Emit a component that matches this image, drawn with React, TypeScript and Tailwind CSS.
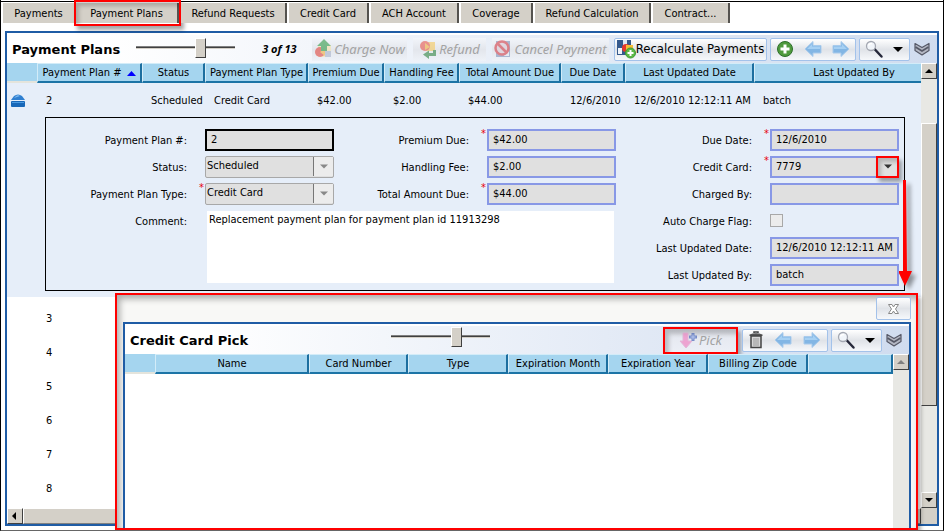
import React from "react";

const UI = "font-['DejaVu_Sans_Condensed','DejaVu_Sans',sans-serif] [font-stretch:condensed]";
const SLANTED = "font-['Noto_Sans','Open_Sans',sans-serif] italic [font-stretch:normal]";

function Arrow({ flip = false }: { flip?: boolean }) {
  return (
    <svg width="18" height="18" viewBox="0 0 18 18" className={flip ? "-scale-x-100" : ""} aria-hidden="true">
      <path d="M1 9 L9 1.500 V5.500 H17 V13 H9 V16.500 Z" fill="#83b6e4" stroke="#a9cbec" strokeWidth="1" />
      <path d="M3 9 L8 4 V6.500 H16 V9 Z" fill="#a6d0f3" />
    </svg>
  );
}

function SearchIcon() {
  return (
    <svg width="22" height="19" viewBox="0 0 22 19" aria-hidden="true">
      <path d="M10.500 9 L17.500 16.500" stroke="#26283a" strokeWidth="2.500" strokeLinecap="round" />
      <circle cx="7" cy="6" r="4.500" fill="#f1f5fa" stroke="#a4a8b2" strokeWidth="1.300" />
      <path d="M4.500 5.500 Q5 3.500 8 3.500" stroke="#fff" strokeWidth="1.500" fill="none" />
    </svg>
  );
}

function Caret({ className }: { className: string }) {
  return (
    <svg width="10" height="5" viewBox="0 0 10 5" className={className} aria-hidden="true">
      <path d="M0 0 H10 L5 5 Z" fill="currentColor" />
    </svg>
  );
}

function Chevrons() {
  return (
    <svg width="16" height="14" viewBox="0 0 16 14" aria-hidden="true">
      <path d="M1 1.500 L8 5.500 L15 1.500 V8.500 L8 13 L1 8.500 Z" fill="#b3b7c3" stroke="#555866" strokeWidth="1.200" strokeLinejoin="round" />
      <path d="M1.500 5 L8 9 L14.500 5" fill="none" stroke="#555866" strokeWidth="1.600" />
    </svg>
  );
}

function ChargeIcon() {
  return (
    <svg width="18" height="20" viewBox="0 0 18 20" className="opacity-60" aria-hidden="true">
      <rect x="4" y="6" width="13" height="12" fill="#f6e3a8" />
      <circle cx="6" cy="13" r="5" fill="#e2453c" />
      <path d="M6 13 L11 9 V17 Z" fill="#f3b23f" />
      <rect x="11" y="12" width="6" height="6" fill="#a9b4cc" />
      <path d="M10 0 L17 7 H13 V12 H7 V7 H3 Z" fill="#2f9a47" />
    </svg>
  );
}

function RefundIcon() {
  return (
    <svg width="18" height="19" viewBox="0 0 18 19" className="opacity-60" aria-hidden="true">
      <rect x="7" y="2" width="9" height="9" fill="#f6c95c" />
      <circle cx="6" cy="6" r="5" fill="#e8574c" />
      <path d="M6 3 L11 7 L6 10 Z" fill="#f3b23f" />
      <path d="M14 10 H17 V16 H10 V19 L4 14.500 L10 10.500 V13 H14 Z" fill="#2f8440" />
    </svg>
  );
}

function CancelIcon() {
  return (
    <svg width="18" height="18" viewBox="0 0 18 18" className="opacity-60" aria-hidden="true">
      <rect x="2" y="1" width="14" height="16" fill="#7f93ba" />
      <rect x="10" y="10" width="5" height="6" fill="#e3e9f3" />
      <circle cx="8" cy="8" r="6.500" fill="#dccbd5" stroke="#d43b45" strokeWidth="2.500" />
      <path d="M4 4 L12 12" stroke="#d43b45" strokeWidth="2.500" />
    </svg>
  );
}

function RecalcIcon() {
  return (
    <svg width="19" height="20" viewBox="0 0 19 20" aria-hidden="true">
      <rect x="0" y="1" width="14" height="15" fill="#35598c" />
      <rect x="6" y="1" width="4" height="5" fill="#dfe8f4" />
      <rect x="1" y="9" width="4" height="6" fill="#eef3fa" />
      <circle cx="9" cy="9" r="4" fill="#e5382c" />
      <rect x="9" y="6" width="7" height="6" fill="#f7bd35" />
      <circle cx="13.500" cy="14" r="5" fill="#5cb947" stroke="#3f9a35" />
      <path d="M13.500 11 V17 M10.500 14 H16.500" stroke="#fff" strokeWidth="2" />
    </svg>
  );
}

function AddIcon() {
  return (
    <svg width="18" height="18" viewBox="0 0 18 18" aria-hidden="true">
      <circle cx="9" cy="9" r="7.500" fill="#4f9a3d" stroke="#2d6f2b" />
      <path d="M9 4.500 V13.500 M4.500 9 H13.500" stroke="#fff" strokeWidth="3" />
    </svg>
  );
}

function TrashIcon() {
  return (
    <svg width="14" height="18" viewBox="0 0 14 18" aria-hidden="true">
      <path d="M5 2 V1 H9 V2" fill="none" stroke="#444" strokeWidth="1.500" />
      <path d="M0.500 3.500 Q7 1 13.500 3.500 V5 H0.500 Z" fill="#555" />
      <path d="M2 5 H12 V16.500 H2 Z" fill="#d7d7d7" stroke="#444" strokeWidth="1.500" />
      <path d="M5 7 V15 M7 7 V15 M9 7 V15" stroke="#999" />
    </svg>
  );
}

function PickIcon() {
  return (
    <svg width="18" height="17" viewBox="0 0 18 17" className="opacity-70" aria-hidden="true">
      <path d="M4 1 H9 V9 H13 L7 16 L1 9 H4 Z" fill="#f086c4" stroke="#dfa0cb" />
      <path d="M14 1 V9 M10 5 H18" stroke="#4966b8" strokeWidth="3" />
      <path d="M14 2.500 V7.500 M11.500 5 H16.500" stroke="#a6baf0" strokeWidth="1" />
    </svg>
  );
}

function DrawerIcon() {
  return (
    <svg width="14" height="13" viewBox="0 0 14 13" aria-hidden="true">
      <path d="M0 6 L3 2 Q7 -1 11 2 L14 6 Z" fill="#2f7fd0" />
      <path d="M3 4 Q5 1.500 7 1 L9 2 Z" fill="#7db9ee" />
      <rect x="0" y="7" width="14" height="6" rx="1" fill="#1767b8" />
      <rect x="1" y="8" width="12" height="1" fill="#4b9be2" />
    </svg>
  );
}

function ScrollButton({ dir, muted = false }: { dir: "up" | "down" | "left"; muted?: boolean }) {
  const paths = { up: "M0 4 L4 0 L8 4 Z", down: "M0 0 H8 L4 4 Z", left: "M5 0 V8 L1 4 Z" };
  return (
    <button
      aria-label={`Scroll ${dir}`}
      className="flex h-4 w-4 shrink-0 items-center justify-center border border-t-white border-l-white border-r-[#404040] border-b-[#404040] bg-[#d4d0c8]"
    >
      <svg width="8" height={dir === "left" ? 8 : 4} viewBox={dir === "left" ? "0 0 8 8" : "0 0 8 4"} aria-hidden="true">
        <path d={paths[dir]} fill={muted ? "#808080" : "#000"} />
      </svg>
    </button>
  );
}

function RangeSlider({ label, value }: { label: string; value: number }) {
  return (
    <input
      type="range"
      aria-label={label}
      defaultValue={value}
      className="h-5 w-[99px] appearance-none bg-transparent [&::-webkit-slider-runnable-track]:h-[3px] [&::-webkit-slider-runnable-track]:border-t [&::-webkit-slider-runnable-track]:border-b [&::-webkit-slider-runnable-track]:border-t-[#808080] [&::-webkit-slider-runnable-track]:border-b-[#d4d0c8] [&::-webkit-slider-runnable-track]:bg-[#404040] [&::-webkit-slider-thumb]:-mt-[9px] [&::-webkit-slider-thumb]:h-5 [&::-webkit-slider-thumb]:w-[11px] [&::-webkit-slider-thumb]:appearance-none [&::-webkit-slider-thumb]:border [&::-webkit-slider-thumb]:border-t-white [&::-webkit-slider-thumb]:border-l-white [&::-webkit-slider-thumb]:border-r-[#404040] [&::-webkit-slider-thumb]:border-b-[#404040] [&::-webkit-slider-thumb]:bg-[#d4d0c8]"
    />
  );
}

function GhostButton({ icon, text, width }: { icon: React.ReactNode; text: string; width: string }) {
  return (
    <button
      disabled
      className={`flex h-[23px] items-center justify-center gap-0.5 bg-linear-to-b from-[#f2f5fa] via-[#e3e6ec] to-[#eef2f8] text-[13px] whitespace-nowrap text-[#a3a3a3] ${SLANTED} ${width}`}
    >
      {icon}
      {text}
    </button>
  );
}

const groupBox =
  "flex h-[23px] items-center rounded-xs border border-[#a3c2ea] bg-linear-to-b from-white via-[#e0e3e8] to-[#f6f8fb]";

function ToolGroup({ first, label }: { first: React.ReactNode; label: string }) {
  return (
    <>
      <div className={`${groupBox} w-[86px] justify-around`}>
        <button aria-label={label}>{first}</button>
        <button aria-label="Previous record"><Arrow /></button>
        <button aria-label="Next record"><Arrow flip /></button>
      </div>
      <button aria-label="Search options" className={`${groupBox} ml-[3px] w-[51px] justify-between pr-1.5 pl-1`}>
        <SearchIcon />
        <Caret className="text-black" />
      </button>
      <button aria-label="Expand toolbar" className="ml-1"><Chevrons /></button>
    </>
  );
}

const thClass =
  "h-5 border-t border-r-2 border-b-2 border-l border-t-[#d3ecf8] border-r-[#1c6e9f] border-b-[#1c74a6] border-l-[#d3ecf8] bg-[#a5d5ef] p-0 pt-px pl-px text-center text-[11px] leading-4 font-normal whitespace-nowrap";
const thBlank = "h-5 border-b-2 border-b-[#e4e4dc] bg-[#a5d5ef] p-0";

const tabs = [
  { name: "Payments", w: "w-[71px]" },
  { name: "Payment Plans", w: "w-[103px]" },
  { name: "Refund Requests", w: "w-[106px]" },
  { name: "Credit Card", w: "w-[80px]" },
  { name: "ACH Account", w: "w-[88px]" },
  { name: "Coverage", w: "w-[72px]" },
  { name: "Refund Calculation", w: "w-[116px]" },
  { name: "Contract...", w: "w-[77px]" },
];

const headers = [
  "Payment Plan #", "Status", "Payment Plan Type", "Premium Due", "Handling Fee",
  "Total Amount Due", "Due Date", "Last Updated Date", "Last Updated By",
];
const activeRow = ["2", "Scheduled", "Credit Card", "$42.00", "$2.00", "$44.00", "12/6/2010", "12/6/2010 12:12:11 AM", "batch"];
const mainCols = ["w-[30px]", "w-[105px]", "w-[63px]", "w-[103px]", "w-[76px]", "w-[75px]", "w-[102px]", "w-[64px]", "w-[129px]", "w-[200px]"];

function Label({ id, text, place }: { id: string; text: string; place: string }) {
  return (
    <label htmlFor={id} className={`flex h-[27px] items-center justify-end pt-0.5 pr-[18px] whitespace-nowrap ${place}`}>
      {text}
    </label>
  );
}

function Star() {
  return <span className="absolute top-0.5 -left-[6px] text-[11px] leading-3 text-red-600">*</span>;
}

function Field({ id, value, place, required = false, border = "border-[#8898e6]", children }: {
  id: string; value: string; place: string; required?: boolean; border?: string; children?: React.ReactNode;
}) {
  return (
    <div className={`relative flex h-[27px] items-center ${place}`}>
      {required && <Star />}
      <input id={id} readOnly value={value} className={`h-[22px] w-full border-2 bg-[#e0e0e0] px-1 outline-none ${border}`} />
      {children}
    </div>
  );
}

function SelectField({ id, value, place, required = false }: { id: string; value: string; place: string; required?: boolean }) {
  return (
    <div className={`relative flex h-[27px] items-center ${place}`}>
      {required && <Star />}
      <select id={id} className="h-[22px] w-full appearance-none rounded-xs border border-[#a8a8a8] bg-[#e0e0e0] px-px pb-0.5 outline-none">
        <option>{value}</option>
      </select>
      <span className="pointer-events-none absolute top-1 right-px flex h-[19px] w-5 items-center justify-center border-l border-[#777] bg-[#ececec]">
        <Caret className="w-2 text-[#888]" />
      </span>
    </div>
  );
}

function PlanForm() {
  return (
    <form className="ml-[38px] grid w-[860px] grid-cols-[159px_129px_153px_129px_154px_129px] border border-black pt-2 pb-0.5">
      <Label id="plan" text="Payment Plan #:" place="col-start-1 row-start-1" />
      <Field id="plan" value="2" border="border-black" place="col-start-2 row-start-1" />
      <Label id="status" text="Status:" place="col-start-1 row-start-2" />
      <SelectField id="status" value="Scheduled" place="col-start-2 row-start-2" />
      <Label id="type" text="Payment Plan Type:" place="col-start-1 row-start-3" />
      <SelectField id="type" value="Credit Card" required place="col-start-2 row-start-3" />
      <Label id="comment" text="Comment:" place="col-start-1 row-start-4" />
      <textarea
        id="comment"
        readOnly
        defaultValue="Replacement payment plan for payment plan id 11913298"
        className="col-span-3 col-start-2 row-span-3 row-start-4 mx-0.5 mt-1 h-[72px] resize-none bg-white px-0.5 py-px leading-4 outline-none"
      />
      <Label id="premium" text="Premium Due:" place="col-start-3 row-start-1" />
      <Field id="premium" value="$42.00" required place="col-start-4 row-start-1" />
      <Label id="fee" text="Handling Fee:" place="col-start-3 row-start-2" />
      <Field id="fee" value="$2.00" place="col-start-4 row-start-2" />
      <Label id="total" text="Total Amount Due:" place="col-start-3 row-start-3" />
      <Field id="total" value="$44.00" required place="col-start-4 row-start-3" />
      <Label id="due" text="Due Date:" place="col-start-5 row-start-1" />
      <Field id="due" value="12/6/2010" required place="col-start-6 row-start-1" />
      <Label id="card" text="Credit Card:" place="col-start-5 row-start-2" />
      <Field id="card" value="7779" required place="col-start-6 row-start-2">
        <button
          type="button"
          aria-label="Pick a credit card"
          className="absolute right-0 flex h-[22px] w-[23px] items-center justify-center border-2 border-[#f00] bg-[#e0e0e0] shadow-[3px_4px_4px_rgba(0,0,0,0.35),inset_3px_4px_4px_rgba(0,0,0,0.2)]"
        >
          <Caret className="w-2 text-[#333]" />
        </button>
        <svg width="20" height="108" viewBox="0 0 20 108" className="absolute top-[27px] left-[127px] drop-shadow-[4px_4px_2px_rgba(0,0,0,0.4)]" aria-hidden="true">
          <path d="M6 0 H9 L10 91 H15 L8 106 L1 91 H6 Z" fill="#f00" />
        </svg>
      </Field>
      <Label id="charged" text="Charged By:" place="col-start-5 row-start-3" />
      <Field id="charged" value="" place="col-start-6 row-start-3" />
      <Label id="auto" text="Auto Charge Flag:" place="col-start-5 row-start-4" />
      <div className="col-start-6 row-start-4 flex h-[27px] items-center">
        <input id="auto" type="checkbox" className="h-[13px] w-[13px] appearance-none border border-[#a8a8a8] bg-[#ececec]" />
      </div>
      <Label id="updated" text="Last Updated Date:" place="col-start-5 row-start-5" />
      <Field id="updated" value="12/6/2010 12:12:11 AM" place="col-start-6 row-start-5" />
      <Label id="by" text="Last Updated By:" place="col-start-5 row-start-6" />
      <Field id="by" value="batch" place="col-start-6 row-start-6" />
    </form>
  );
}

const toolbarClass = "flex h-[30px] shrink-0 items-center border-t-2 border-t-white bg-linear-to-r from-white from-10% to-[#d0dcef] pl-[5px]";
const titleClass = "pt-px font-['DejaVu_Sans',sans-serif] text-[13px] font-bold [font-stretch:normal] whitespace-nowrap";

function CreditCardPick() {
  return (
    <section
      role="dialog"
      aria-label="Credit Card Pick"
      className="absolute top-[293px] right-[25px] bottom-0 left-[114px] flex flex-col border-2 border-[#f00] bg-[#f8f8f6] pr-[5px] pl-1.5 shadow-[3px_4px_4px_rgba(0,0,0,0.3),inset_3px_4px_6px_rgba(0,0,0,0.3)]"
    >
      <div className="flex h-[27px] shrink-0 items-center justify-end">
        <button aria-label="Close" className={`${groupBox} h-5 w-[35px] justify-center`}>
          <svg width="11" height="10" viewBox="0 0 11 10" aria-hidden="true">
            <path d="M0.500 0.500 H4 L5.500 3 L7 0.500 H10.500 L7.500 5 L10.500 9.500 H7 L5.500 7 L4 9.500 H0.500 L3.500 5 Z" fill="#fff" stroke="#888" />
          </svg>
        </button>
      </div>
      <div className="flex min-h-0 flex-1 flex-col border-2 border-b-0 border-[#1f5ca5] bg-white">
        <div className={`${toolbarClass} pr-[7px]`}>
          <h2 className={titleClass}>Credit Card Pick</h2>
          <div className="ml-[143px] flex pb-2"><RangeSlider label="Columns shown" value={68} /></div>
          <div className="ml-auto flex items-center">
            <button
              disabled
              className={`mr-1 flex h-[27px] w-[75px] items-center justify-center gap-0.5 border-2 border-[#f00] bg-linear-to-b from-[#e3e6ee] to-[#eceff6] text-[13px] text-[#a3a3a3] shadow-[3px_4px_4px_rgba(0,0,0,0.3),inset_4px_5px_4px_rgba(0,0,0,0.2)] ${SLANTED}`}
            >
              <PickIcon />
              Pick
            </button>
            <ToolGroup first={<TrashIcon />} label="Delete record" />
          </div>
        </div>
        <div className="flex min-h-0 flex-1">
          <div className="min-w-0 flex-1">
            <table className="w-full table-fixed border-separate border-spacing-0">
              <thead>
                <tr>
                  <th className={`${thBlank} w-[30px]`} />
                  <th className={`${thClass} w-[154px]`}>Name</th>
                  <th className={`${thClass} w-[99px]`}>Card Number</th>
                  <th className={`${thClass} w-[100px]`}>Type</th>
                  <th className={`${thClass} w-[100px]`}>Expiration Month</th>
                  <th className={`${thClass} w-[100px]`}>Expiration Year</th>
                  <th className={`${thClass} w-[100px]`}>Billing Zip Code</th>
                  <th className={thClass} />
                </tr>
              </thead>
            </table>
          </div>
          <div className="w-4 bg-[#e8e8e4]"><ScrollButton dir="up" muted /></div>
        </div>
      </div>
    </section>
  );
}

export default function App() {
  return (
    <main className={`relative flex min-h-screen flex-col overflow-hidden border-x border-b border-x-black border-b-[#666] bg-white text-[11px] leading-4 text-black ${UI}`}>
      <div className="mt-px h-px bg-black" />
      <nav className="ml-0.5 flex h-[21px] items-end">
        {tabs.map((t) => (
          <div key={t.name} className={`relative mr-0.5 ${t.w}`}>
            <button
              className={`h-5 w-full border-[#55534f] bg-[#d4d0c8] pt-0.5 text-center whitespace-nowrap ${t.name === "Payments" ? "" : "border-r-2"}`}
            >
              {t.name}
            </button>
            {t.name === "Payment Plans" && (
              <span className="pointer-events-none absolute -inset-x-[2px] -top-[3px] -bottom-[3px] border-2 border-[#f00] shadow-[3px_4px_4px_rgba(0,0,0,0.35),inset_3px_4px_4px_rgba(0,0,0,0.2)]" />
            )}
          </div>
        ))}
      </nav>

      <section className="mx-1 mt-2 mb-1 flex flex-1 flex-col border-2 border-[#1f5ca5]">
        <div className={`${toolbarClass} pr-[7px]`}>
          <h1 className={titleClass}>Payment Plans</h1>
          <div className="ml-4 flex pb-1"><RangeSlider label="Columns shown" value={67} /></div>
          <span className={`ml-[27px] text-[11px] font-bold whitespace-nowrap ${SLANTED}`}>3 of 13</span>
          <div className="ml-auto flex items-center">
            <GhostButton icon={<ChargeIcon />} text="Charge Now" width="w-[95px]" />
            <GhostButton icon={<RefundIcon />} text="Refund" width="w-[73px] ml-1.5" />
            <GhostButton icon={<CancelIcon />} text="Cancel Payment" width="w-[117px] ml-1.5" />
            <button className={`${groupBox} mr-[3px] ml-[5px] w-[153px] justify-center text-[13px] whitespace-nowrap`}>
              <RecalcIcon />
              Recalculate Payments
            </button>
            <ToolGroup first={<AddIcon />} label="Add record" />
          </div>
        </div>

        <div className="flex flex-1">
          <div className="flex min-w-0 flex-1 flex-col">
            <div className="flex-1 overflow-hidden">
              <table className="w-[947px] table-fixed border-separate border-spacing-0">
                <colgroup>
                  {mainCols.map((w, i) => <col key={i} className={w} />)}
                </colgroup>
                <thead>
                  <tr>
                    <th className={thBlank} />
                    {headers.map((h, i) => (
                      <th key={h} className={thClass}>
                        {h}
                        {i === 0 && (
                          <svg width="9" height="5" viewBox="0 0 9 5" className="ml-1.5 inline-block align-baseline" aria-hidden="true">
                            <path d="M0 5 L4.500 0 L9 5 Z" fill="#00f" />
                          </svg>
                        )}
                      </th>
                    ))}
                  </tr>
                </thead>
                <tbody>
                  <tr className="h-[34px] bg-[#e6eef9]">
                    <td className="p-0 pl-1"><button aria-label="Collapse row" className="block"><DrawerIcon /></button></td>
                    {activeRow.map((c, i) => (
                      <td key={i} className="p-0 pt-0.5 pl-[9px] whitespace-nowrap">{c}</td>
                    ))}
                  </tr>
                  <tr className="bg-[#e6eef9]">
                    <td colSpan={10} className="p-0 pb-1.5"><PlanForm /></td>
                  </tr>
                  <tr className="h-1"><td colSpan={10} className="p-0" /></tr>
                  {["3", "4", "5", "6", "7", "8"].map((n) => (
                    <tr key={n} className="h-[34px]">
                      <td className="p-0" />
                      <td colSpan={9} className="p-0 pt-0.5 pl-[9px]">{n}</td>
                    </tr>
                  ))}
                </tbody>
              </table>
            </div>
            <div className="flex h-4 shrink-0 bg-[#e8e8e4]">
              <ScrollButton dir="left" />
              <div className="flex-1 border border-t-white border-r-[#404040] border-b-[#808080] border-l-white bg-[#d4d0c8]" />
            </div>
          </div>
          <div className="flex w-4 flex-col bg-[#e8e8e4]">
            <ScrollButton dir="up" />
            <div className="grow-44" />
            <div className="grow-283 border border-t-white border-r-[#404040] border-b-[#404040] border-l-white bg-[#d4d0c8]" />
            <div className="grow-86" />
            <ScrollButton dir="down" />
            <div className="h-4 bg-[#d4d0c8]" />
          </div>
        </div>
      </section>

      <CreditCardPick />
    </main>
  );
}
